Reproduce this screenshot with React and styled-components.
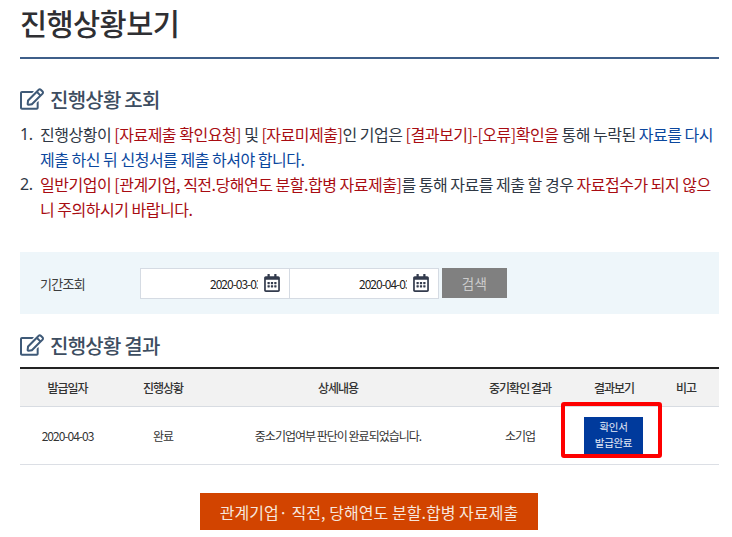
import React from "react";
import styled, { createGlobalStyle } from "styled-components";
import { FaRegEdit, FaRegCalendarAlt } from "react-icons/fa";

const Global = createGlobalStyle`
  html, body { margin: 0; padding: 0; background: #fff; }
  body { font-family: "Noto Sans CJK KR", "Noto Sans", sans-serif; color: #333; overflow: hidden; }
`;
const Page = styled.div`
  width: 699px; height: 537px; padding-left: 20px; box-sizing: content-box; overflow: hidden;
`;
const Title = styled.h1`
  margin: 0; height: 59px; box-sizing: border-box;
  border-bottom: 2px solid #3f5f8a;
  font-size: 29.5px; line-height: 44px; font-weight: 500; letter-spacing: -0.6px; color: #2f2f33;
`;
const SectionHead = styled.h2`
  margin: ${(p) => p.$top}px 0 0; display: flex; align-items: center; gap: 6px; height: 30px;
  font-size: 20px; font-weight: 500; letter-spacing: -0.75px; color: #3d4d60;
  svg { width: 24px; height: 22px; color: #3f5a78; flex: none; }
`;
const Notes = styled.ol`
  margin: 8px 0 0; padding: 0; list-style: none;
`;
const Note = styled.li`
  display: flex; font-size: 16px; line-height: 25px; letter-spacing: -0.49px; color: #2f3845; white-space: nowrap;
`;
const Num = styled.span`
  width: 20px; flex: none; font-family: "Noto Sans", sans-serif; font-size: 16px;
`;
const Red = styled.span` color: #a80c12; `;
const Blue = styled.span` color: #0b479e; `;
const FilterPanel = styled.div`
  margin-top: 30px; height: 62px; background: #eef6fa; display: flex; align-items: center; box-sizing: border-box;
`;
const FilterLabel = styled.span`
  width: 120px; padding-left: 20px; box-sizing: border-box; font-size: 13px; letter-spacing: -0.7px; color: #3c3c3c; flex: none;
`;
const Field = styled.div`
  width: 150px; height: 31px; box-sizing: border-box; background: #fff; border: 1px solid #d5dbe3;
  display: flex; align-items: center; justify-content: flex-end; padding-right: 9px; gap: 6px; margin-right: -1px;
  svg { width: 16px; height: 18px; color: #333b4d; flex: none; }
`;
const FieldText = styled.span`
  width: 48px; overflow: hidden; white-space: nowrap; font-size: 12px; letter-spacing: -1px; color: #222;
`;
const SearchButton = styled.button`
  margin-left: 4px; width: 65px; height: 30px; border: 0; background: #808080; color: #ccc;
  font-family: inherit; font-size: 13.5px; letter-spacing: 0.4px; padding: 0;
`;
const Table = styled.div`
  margin-top: 7px; border-top: 2px solid #222; display: grid;
  grid-template-columns: 95px 96px 254px 110px 78px 66px;
`;
const HeadCell = styled.div`
  height: 37px; background: #f2f2f2; border-bottom: 1px solid #d8dce2; display: flex; align-items: center; justify-content: center;
  font-size: 12px; font-weight: 500; letter-spacing: -1px; color: #333;
`;
const Cell = styled.div`
  position: relative; height: 57px; border-bottom: 1px solid #dcdfe5; display: flex; align-items: center; justify-content: center;
  font-size: 12px; letter-spacing: -1px; color: #333;
`;
const IssuedButton = styled.div`
  width: 59px; height: 37px; margin: -1px 1px 0 0; background: #003a9c; color: #e6ecf8; font-size: 10.5px; line-height: 16px; letter-spacing: -0.3px;
  display: flex; align-items: center; justify-content: center; text-align: center;
`;
const Highlight = styled.div`
  position: absolute; left: -14px; top: -5px; width: 101px; height: 56px; box-sizing: border-box; border: 4px solid #fe0000; border-radius: 3px;
`;
const Footer = styled.div`
  margin-top: 28px; display: flex; padding-left: 180px;
`;
const SubmitButton = styled.button`
  width: 338px; height: 37px; border: 0; background: #d24400; color: #f7e6dc; padding: 0;
  font-family: inherit; font-size: 16px; letter-spacing: 0.05px;
`;

export default function App() {
  return (
    <Page>
      <Global />
      <Title>진행상황보기</Title>
      <SectionHead $top={25}><FaRegEdit />진행상황 조회</SectionHead>
      <Notes>
        <Note>
          <Num>1.</Num>
          <span>
            진행상황이 <Red>[자료제출 확인요청]</Red> 및 <Red>[자료미제출]</Red>인 기업은 <Red>[결과보기]-[오류]확인을</Red> 통해 누락된 <Blue>자료를 다시</Blue>
            <br />
            <Blue>제출 하신 뒤 신청서를 제출 하셔야 합니다.</Blue>
          </span>
        </Note>
        <Note>
          <Num>2.</Num>
          <span>
            <Red>일반기업이 [관계기업, 직전.당해연도 분할.합병 자료제출]</Red>를 통해 자료를 제출 할 경우 <Red>자료접수가 되지 않으</Red>
            <br />
            <Red>니 주의하시기 바랍니다.</Red>
          </span>
        </Note>
      </Notes>
      <FilterPanel>
        <FilterLabel>기간조회</FilterLabel>
        <Field><FieldText>2020-03-03</FieldText><FaRegCalendarAlt /></Field>
        <Field><FieldText>2020-04-03</FieldText><FaRegCalendarAlt /></Field>
        <SearchButton>검색</SearchButton>
      </FilterPanel>
      <SectionHead $top={16}><FaRegEdit />진행상황 결과</SectionHead>
      <Table>
        <HeadCell>발급일자</HeadCell>
        <HeadCell>진행상황</HeadCell>
        <HeadCell>상세내용</HeadCell>
        <HeadCell>중기확인 결과</HeadCell>
        <HeadCell>결과보기</HeadCell>
        <HeadCell>비고</HeadCell>
        <Cell>2020-04-03</Cell>
        <Cell>완료</Cell>
        <Cell>중소기업여부 판단이 완료되었습니다.</Cell>
        <Cell>소기업</Cell>
        <Cell>
          <IssuedButton>확인서<br />발급완료</IssuedButton>
          <Highlight />
        </Cell>
        <Cell />
      </Table>
      <Footer>
        <SubmitButton>관계기업· 직전, 당해연도 분할.합병 자료제출</SubmitButton>
      </Footer>
    </Page>
  );
}
